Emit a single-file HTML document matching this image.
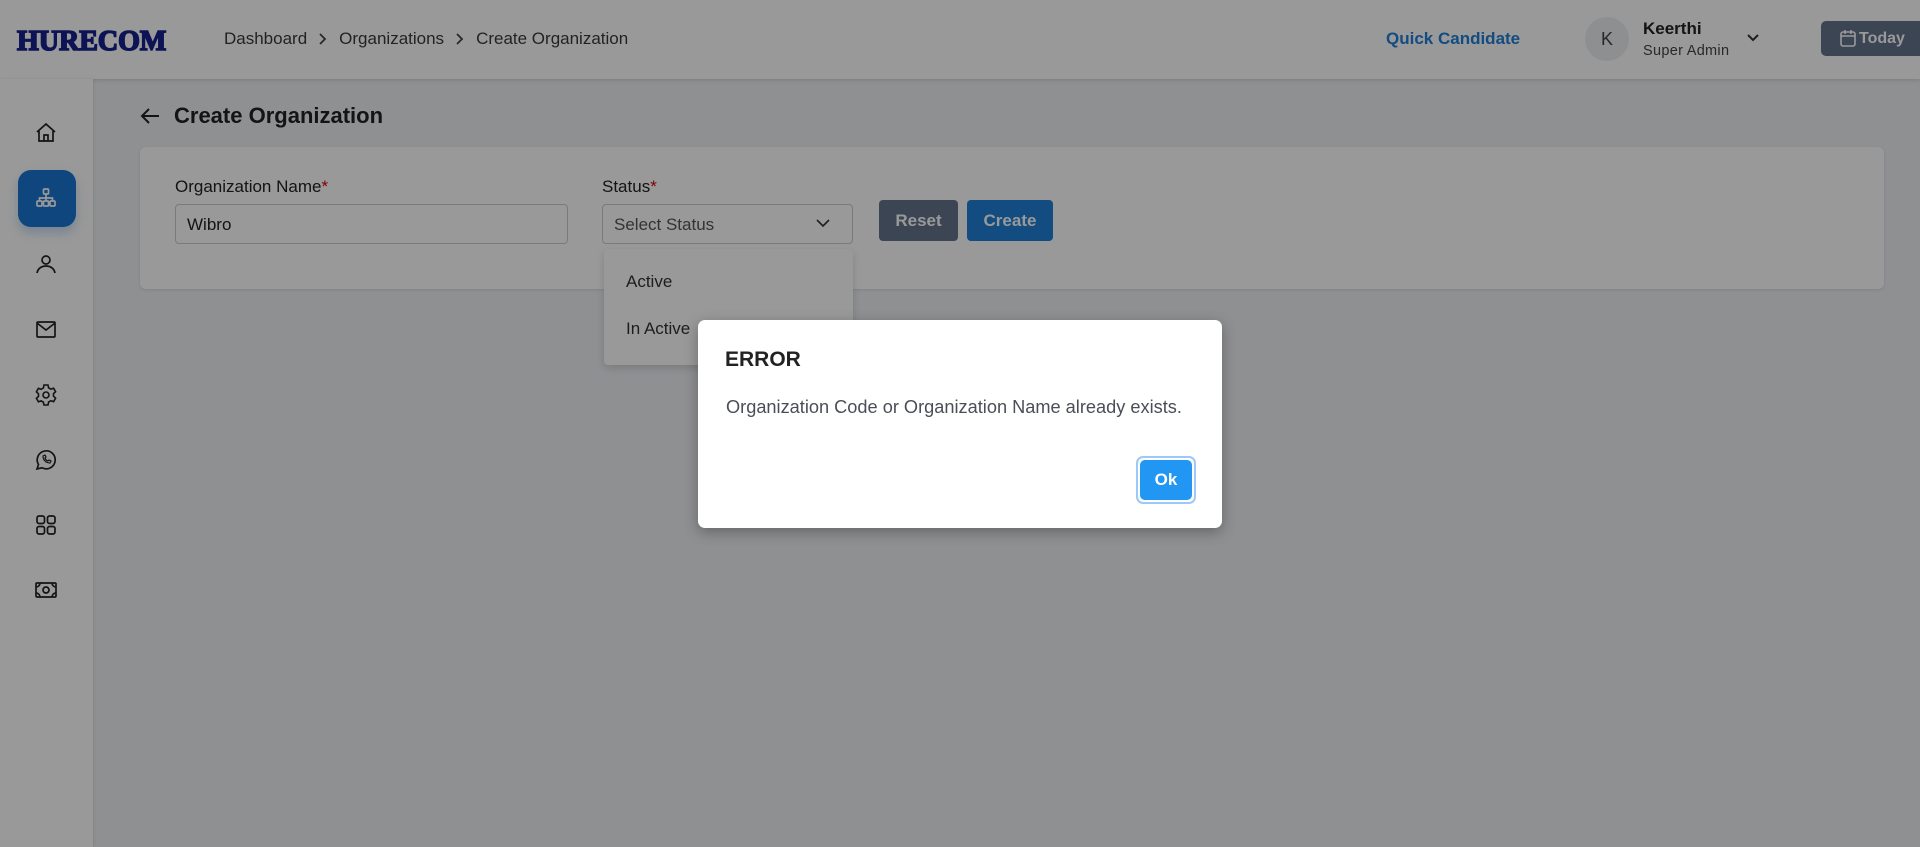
<!DOCTYPE html>
<html><head><meta charset="utf-8"><style>
*{box-sizing:border-box;margin:0;padding:0}
body{width:1920px;height:847px;overflow:hidden;background:#eef0f4;font-family:"Liberation Sans",sans-serif;position:relative;color:#222}
.hdr{position:absolute;left:0;top:0;width:1920px;height:79px;background:#fff;box-shadow:0 1px 4px rgba(0,0,0,.15)}
.logo{position:absolute;left:17px;top:26px;font-family:"Liberation Serif",serif;font-weight:900;font-size:28px;color:#16228e;letter-spacing:0px;-webkit-text-stroke:1.6px #16228e}
.bc{position:absolute;left:224px;top:29px;font-size:17px;color:#3a3a3a;display:flex;align-items:center}
.bc svg{margin:0 10px}
.qc{position:absolute;left:1386px;top:29px;font-size:17px;color:#1f7fd6;font-weight:bold}
.av{position:absolute;left:1585px;top:17px;width:44px;height:44px;border-radius:50%;background:#eceef2;text-align:center;line-height:44px;font-size:18px;color:#444}
.nm{position:absolute;left:1643px;top:19px;font-size:17px;color:#222;font-weight:bold}
.rl{position:absolute;left:1643px;top:43px;font-size:14.5px;color:#444;letter-spacing:.3px}
.today{position:absolute;left:1821px;top:21px;width:110px;height:35px;background:#64748b;border-radius:5px;color:#fff;font-weight:bold;font-size:16px;line-height:35px;padding-left:38px}
.side{position:absolute;left:0;top:79px;width:93px;height:768px;background:#fff;box-shadow:1px 0 3px rgba(0,0,0,.08)}
.ic{position:absolute;left:34px;width:24px;height:24px}
.act{position:absolute;left:18px;top:91px;width:58px;height:57px;background:#1a76d0;border-radius:13px;box-shadow:0 6px 10px rgba(26,118,208,.25)}
.title{position:absolute;left:174px;top:103px;font-size:22px;font-weight:bold;color:#222}
.card{position:absolute;left:140px;top:147px;width:1744px;height:142px;background:#fff;border-radius:6px;box-shadow:0 1px 3px rgba(0,0,0,.1)}
.lbl{position:absolute;top:177px;font-size:17px;color:#222}
.lbl b{color:#d00;font-weight:normal}
.inp{position:absolute;top:204px;height:40px;border:1px solid #c8ccd2;border-radius:4px;background:#fff;font-size:17px;padding:10px 11px;color:#222}
.btn{position:absolute;top:200px;height:41px;border-radius:4px;color:#fff;font-weight:bold;font-size:17px;text-align:center;line-height:41px}
.dd{position:absolute;left:604px;top:249px;width:249px;height:116px;background:#fff;border-radius:4px;box-shadow:0 3px 8px rgba(0,0,0,.15);font-size:17px;color:#333}
.ov{position:absolute;left:0;top:0;width:1920px;height:847px;background:rgba(0,0,0,.4)}
.modal{position:absolute;left:698px;top:320px;width:524px;height:208px;background:#fff;border-radius:7px;box-shadow:0 4px 14px rgba(0,0,0,.3)}
</style></head><body>
<div class="hdr">
<div class="logo">HURECOM</div>
<div class="bc">Dashboard<svg width="12" height="14" viewBox="0 0 12 14"><path d="M3 2l5 5-5 5" fill="none" stroke="#444" stroke-width="1.8"/></svg>Organizations<svg width="12" height="14" viewBox="0 0 12 14"><path d="M3 2l5 5-5 5" fill="none" stroke="#444" stroke-width="1.8"/></svg>Create Organization</div>
<div class="qc">Quick Candidate</div>
<div class="av">K</div>
<div class="nm">Keerthi</div>
<div class="rl">Super Admin</div>
<svg style="position:absolute;left:1745px;top:32px" width="16" height="12" viewBox="0 0 16 12"><path d="M3 3l5 5 5-5" fill="none" stroke="#333" stroke-width="2"/></svg>
<div class="today">Today</div>
<svg style="position:absolute;left:1839px;top:28px" width="18" height="20" viewBox="0 0 18 20"><rect x="2" y="4" width="14" height="14" rx="2" fill="none" stroke="#fff" stroke-width="1.6"/><path d="M2 8h14M6 2v4M12 2v4" stroke="#fff" stroke-width="1.6"/></svg>
</div>
<div class="side">
<div class="act"></div>
<svg class="ic" style="top:42px" viewBox="0 0 24 24" fill="none" stroke="#222" stroke-width="1.7"><path d="M3 11L12 3l9 8M5 10v10h14V10M10 20v-6h4v6"/></svg>
<svg class="ic" style="top:107px" viewBox="0 0 24 24" fill="none" stroke="#fff" stroke-width="1.7"><rect x="9.5" y="3" width="5" height="5" rx="1"/><rect x="3" y="15" width="5" height="5" rx="1"/><rect x="9.5" y="15" width="5" height="5" rx="1"/><rect x="16" y="15" width="5" height="5" rx="1"/><path d="M12 8v7M5.5 15v-3h13v3"/></svg>
<svg class="ic" style="top:173px" viewBox="0 0 24 24" fill="none" stroke="#222" stroke-width="1.7"><circle cx="12" cy="8" r="4"/><path d="M3 21c1-5 5-7 9-7s8 2 9 7"/></svg>
<svg class="ic" style="top:238px" viewBox="0 0 24 24" fill="none" stroke="#222" stroke-width="1.7"><rect x="3" y="5" width="18" height="15" rx="1"/><path d="M3 6l9 7 9-7"/></svg>
<svg class="ic" style="top:304px" viewBox="0 0 24 24" fill="none" stroke="#222" stroke-width="1.6"><circle cx="12" cy="12" r="3"/><path d="M10 2h4l.6 2.8 2.3 1.3 2.7-.9 2 3.5-2.1 1.9v2.6l2.1 1.9-2 3.5-2.7-.9-2.3 1.3L14 22h-4l-.6-2.8-2.3-1.3-2.7.9-2-3.5 2.1-1.9V10.8L2.4 8.9l2-3.5 2.7.9 2.3-1.3z"/></svg>
<svg class="ic" style="top:369px" viewBox="0 0 24 24" fill="none" stroke="#222" stroke-width="1.7"><path d="M3 21l1.5-4.5A9 9 0 1 1 8 19.8z"/><path d="M9 8c0 4 3 7 7 7l1-2-2-1-1 1c-1.5-.5-2.5-1.5-3-3l1-1-1-2z" stroke-width="1.2"/></svg>
<svg class="ic" style="top:434px" viewBox="0 0 24 24" fill="none" stroke="#222" stroke-width="1.7"><rect x="3" y="3" width="7.5" height="7.5" rx="2"/><rect x="13.5" y="3" width="7.5" height="7.5" rx="2"/><rect x="3" y="13.5" width="7.5" height="7.5" rx="2"/><rect x="13.5" y="13.5" width="7.5" height="7.5" rx="2"/></svg>
<svg class="ic" style="top:499px" viewBox="0 0 24 24" fill="none" stroke="#222" stroke-width="1.7"><rect x="2" y="5" width="20" height="14" rx="1"/><circle cx="12" cy="12" r="3"/><path d="M2 9a4 4 0 0 0 4-4M18 5a4 4 0 0 0 4 4M2 15a4 4 0 0 1 4 4M22 15a4 4 0 0 0-4 4"/></svg>
</div>
<svg style="position:absolute;left:139px;top:106px" width="22" height="20" viewBox="0 0 22 20"><path d="M20 10H3M10 3l-7 7 7 7" fill="none" stroke="#222" stroke-width="2"/></svg>
<div class="title">Create Organization</div>
<div class="card"></div>
<div class="lbl" style="left:175px">Organization Name<b>*</b></div>
<div class="lbl" style="left:602px">Status<b>*</b></div>
<div class="inp" style="left:175px;width:393px">Wibro</div>
<div class="inp" style="left:602px;width:251px;color:#555">Select Status</div>
<svg style="position:absolute;left:815px;top:217px" width="16" height="12" viewBox="0 0 16 12"><path d="M2 3l6 6 6-6" fill="none" stroke="#333" stroke-width="1.6"/></svg>
<div class="btn" style="left:879px;width:79px;background:#64748b">Reset</div>
<div class="btn" style="left:967px;width:86px;background:#1f7fd6">Create</div>
<div class="dd"><div style="position:absolute;left:22px;top:23px">Active</div><div style="position:absolute;left:22px;top:70px">In Active</div></div>
<div class="ov"></div>
<div class="modal">
<div style="position:absolute;left:27px;top:28px;font-size:21px;font-weight:bold;color:#222">ERROR</div>
<div style="position:absolute;left:28px;top:77px;font-size:18.2px;color:#4a4f57">Organization Code or Organization Name already exists.</div>
<div style="position:absolute;left:438px;top:136px;width:60px;height:48px;border:2px solid #9cc9fb;border-radius:7px;padding:2px"><div style="width:52px;height:40px;background:#2196f3;border-radius:5px;color:#fff;font-weight:bold;font-size:17px;text-align:center;line-height:40px">Ok</div></div>
</div>
</body></html>
